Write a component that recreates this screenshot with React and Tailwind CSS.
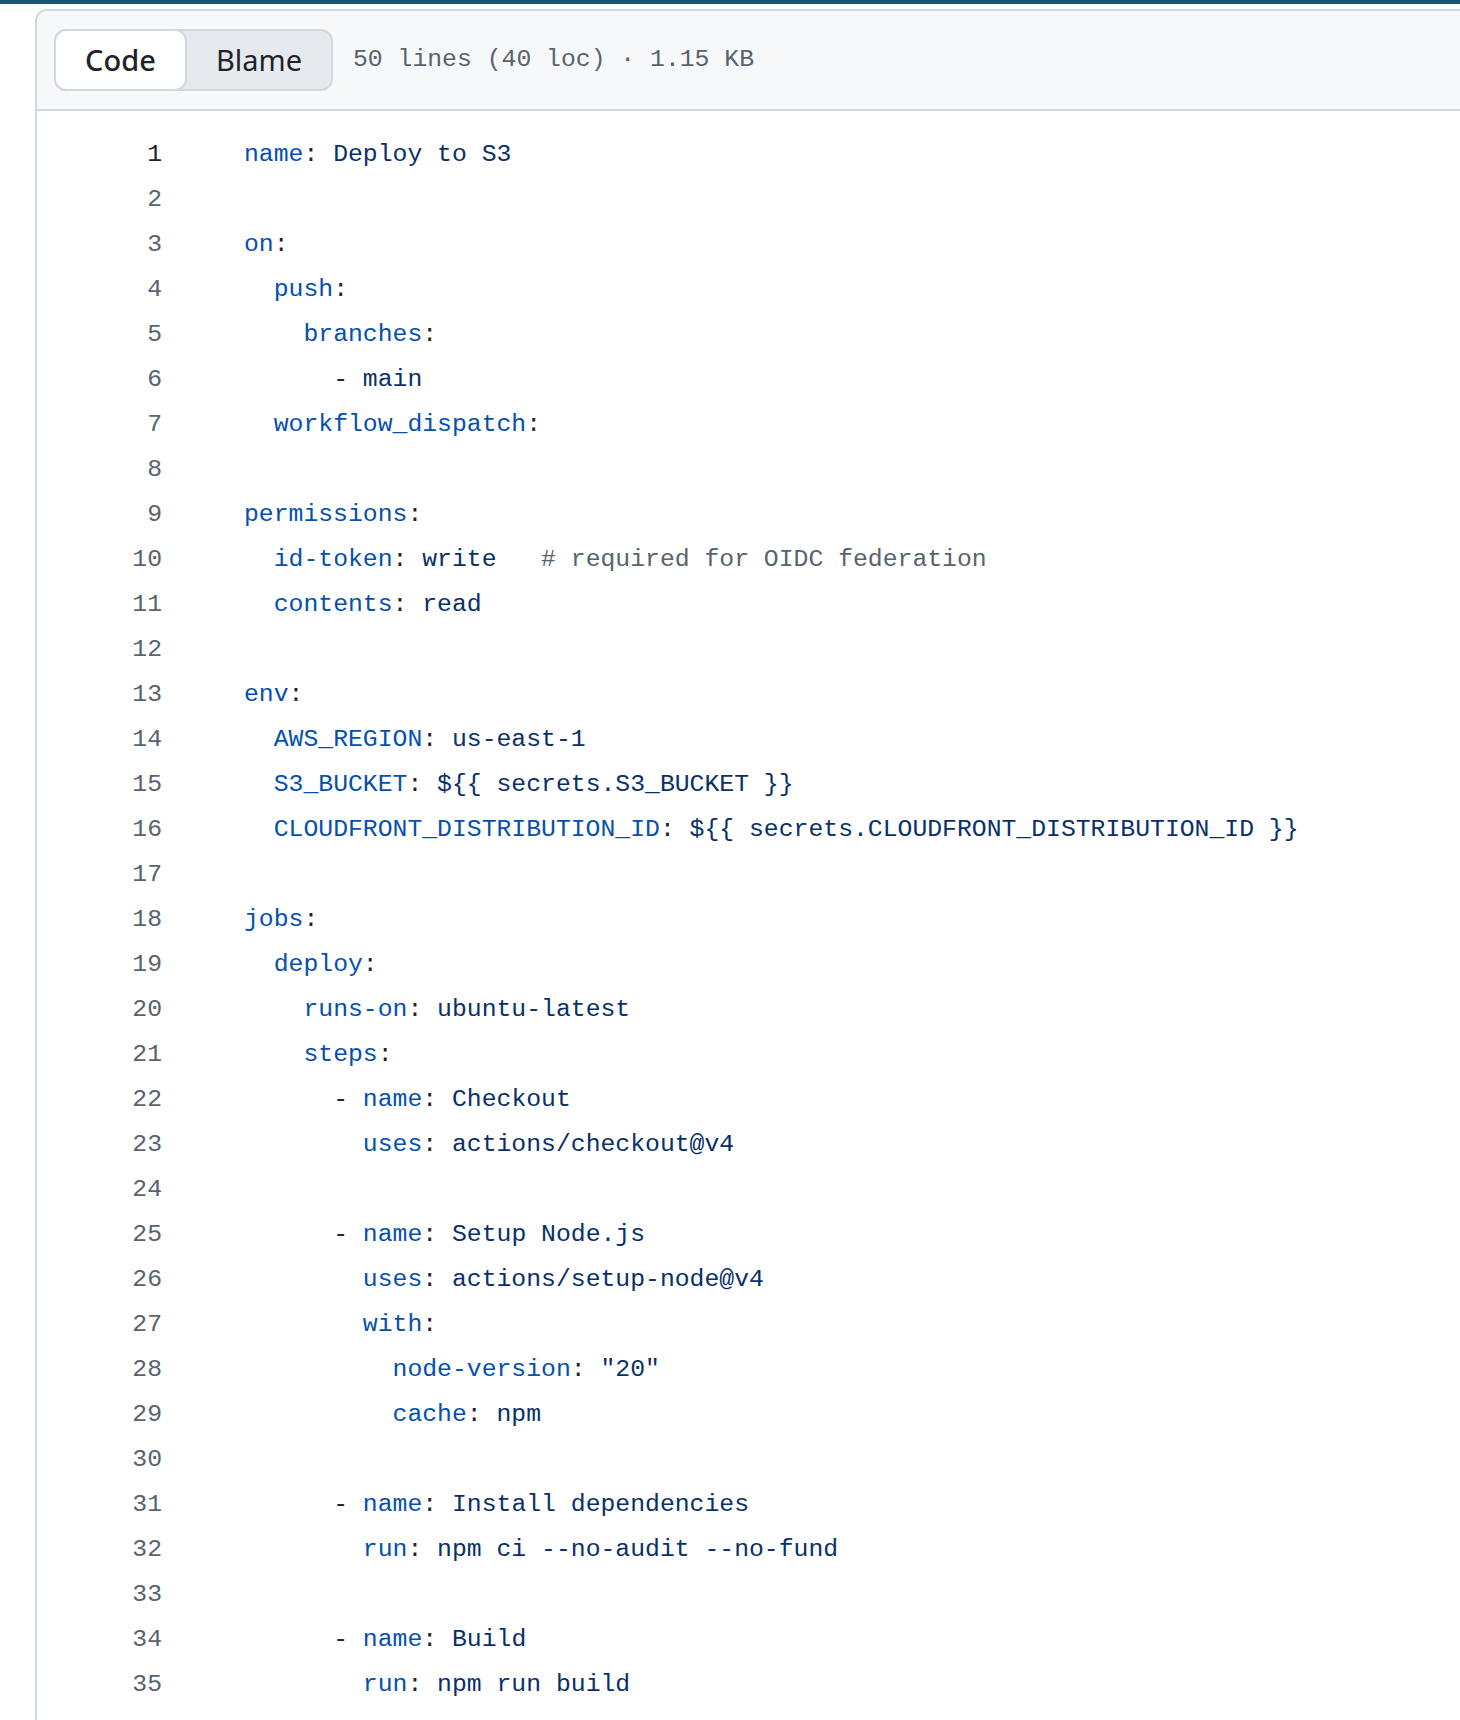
import React from 'react';

const source = `name: Deploy to S3

on:
  push:
    branches:
      - main
  workflow_dispatch:

permissions:
  id-token: write   # required for OIDC federation
  contents: read

env:
  AWS_REGION: us-east-1
  S3_BUCKET: \${{ secrets.S3_BUCKET }}
  CLOUDFRONT_DISTRIBUTION_ID: \${{ secrets.CLOUDFRONT_DISTRIBUTION_ID }}

jobs:
  deploy:
    runs-on: ubuntu-latest
    steps:
      - name: Checkout
        uses: actions/checkout@v4

      - name: Setup Node.js
        uses: actions/setup-node@v4
        with:
          node-version: "20"
          cache: npm

      - name: Install dependencies
        run: npm ci --no-audit --no-fund

      - name: Build
        run: npm run build`;

const lines = source.split('\n');

// very small yaml highlighter: indent, dash, key, colon, value, comment
function renderLine(line) {
  const parts = [];
  let rest = line;
  const indent = rest.match(/^\s*/)[0];
  if (indent) parts.push(<span key="i">{indent}</span>);
  rest = rest.slice(indent.length);
  if (rest.startsWith('- ')) {
    parts.push(<span key="d" className="text-[#1f2328]">- </span>);
    rest = rest.slice(2);
  }
  let comment = '';
  const hash = rest.indexOf('#');
  if (hash >= 0) {
    comment = rest.slice(hash);
    rest = rest.slice(0, hash);
  }
  const colon = rest.indexOf(':');
  if (colon >= 0) {
    parts.push(<span key="k" className="text-[#0550ae]">{rest.slice(0, colon)}</span>);
    parts.push(<span key="c" className="text-[#1f2328]">:</span>);
    parts.push(<span key="v" className="text-[#0a3069]">{rest.slice(colon + 1)}</span>);
  } else if (rest) {
    parts.push(<span key="v" className="text-[#0a3069]">{rest}</span>);
  }
  if (comment) parts.push(<span key="h" className="text-[#59636e]">{comment}</span>);
  return parts;
}

export default function App() {
  return (
    <div className="h-[1720px] overflow-hidden bg-white flex flex-col">
      <div className="h-[4px] bg-[#1d5675] shrink-0" />
      <div className="mt-[5px] ml-[35px] flex-1 flex flex-col border-l-2 border-t-2 border-[#d1d9e0] rounded-tl-[12px]">
        <div className="h-[100px] shrink-0 bg-[#f6f8fa] border-b-2 border-[#d1d9e0] rounded-tl-[10px] flex items-center pl-[17px]">
          <div className="flex h-[62px] w-[279px] bg-[#e6eaef] border-2 border-[#d1d9e0] rounded-[12px]">
            <div
              className="-m-[2px] w-[133px] bg-white border-2 border-[#d1d9e0] rounded-[12px] flex items-center justify-center text-[29px] font-medium text-[#1f2328]"
              style={{ fontFamily: '"Noto Sans", "Open Sans", sans-serif' }}
            >
              Code
            </div>
            <div
              className="flex-1 flex items-center justify-center text-[29px] text-[#1f2328] pl-[2px]"
              style={{ fontFamily: '"Noto Sans", "Open Sans", sans-serif' }}
            >
              Blame
            </div>
          </div>
          <div className="ml-[20px] font-['Liberation_Mono',monospace] text-[24.75px] text-[#59636e]">
            50 lines (40 loc) · 1.15 KB
          </div>
        </div>
        <div className="pt-[21px] font-['Liberation_Mono',monospace] text-[24.75px] leading-[45px] whitespace-pre">
          {lines.map((line, i) => (
            <div key={i} className="flex h-[45px]">
              <div className={`w-[125px] text-right shrink-0 ${i === 0 ? 'text-[#1f2328]' : 'text-[#59636e]'}`}>
                {i + 1}
              </div>
              <div className="pl-[82px]">{renderLine(line)}</div>
            </div>
          ))}
        </div>
      </div>
    </div>
  );
}
